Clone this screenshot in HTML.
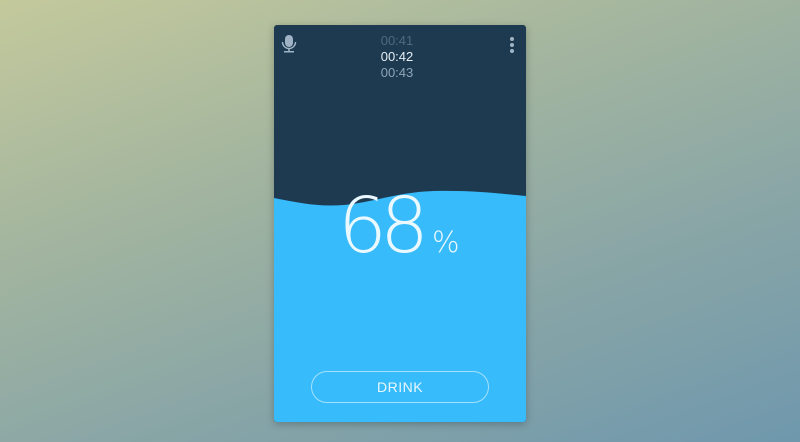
<!DOCTYPE html>
<html><head><style>
html,body{margin:0;padding:0}
body{width:800px;height:442px;overflow:hidden;position:relative;
background:linear-gradient(160deg,#c4c99c 0%,#a3b59f 35%,#8aa6a6 65%,#6f98ad 100%);
font-family:"Liberation Sans",sans-serif}
.card{position:absolute;left:274px;top:25px;width:252px;height:397px;background:#1d3a51;border-radius:3px;overflow:hidden;box-shadow:0 2px 8px rgba(0,0,0,.25)}
.t{position:absolute;width:100%;text-align:center;font-size:13px;left:-3px}
.btn{position:absolute;left:37px;top:346px;width:176px;height:30px;border:1px solid rgba(255,255,255,.55);border-radius:16px;color:#e8f7ff;text-align:center;line-height:30px;font-size:14px;letter-spacing:.5px}
</style></head><body>
<div class="card">
<svg width="252" height="397" style="position:absolute;left:0;top:0">
<path d="M0 173 C25 178 45 182 70 180 C100 177 125 167 160 166 C200 165 230 169 252 171 L252 397 L0 397Z" fill="#37bbfb"/>
<g fill="#9fb3c4"><rect x="11" y="10" width="8" height="12" rx="4"/><path d="M8.5 17 a6.5 6.5 0 0 0 13 0" fill="none" stroke="#9fb3c4" stroke-width="1.5"/><rect x="14.2" y="23" width="1.6" height="3"/><rect x="10" y="26" width="10" height="1.5"/></g>
<g fill="#9fb3c4"><circle cx="238" cy="14" r="2"/><circle cx="238" cy="20" r="2"/><circle cx="238" cy="26" r="2"/></g>
<text x="64" y="227" letter-spacing="-7" font-family="DejaVu Sans, sans-serif" font-weight="200" font-size="77" fill="#eaf8ff">68</text>
<text x="158" y="227" font-family="DejaVu Sans, sans-serif" font-weight="200" font-size="29" fill="#eaf8ff">%</text>
</svg>
<div class="t" style="top:8px;color:#4e6a80">00:41</div>
<div class="t" style="top:24px;color:#e6eef4">00:42</div>
<div class="t" style="top:40px;color:#8fa5b6">00:43</div>
<div class="btn">DRINK</div>
</div>
</body></html>
